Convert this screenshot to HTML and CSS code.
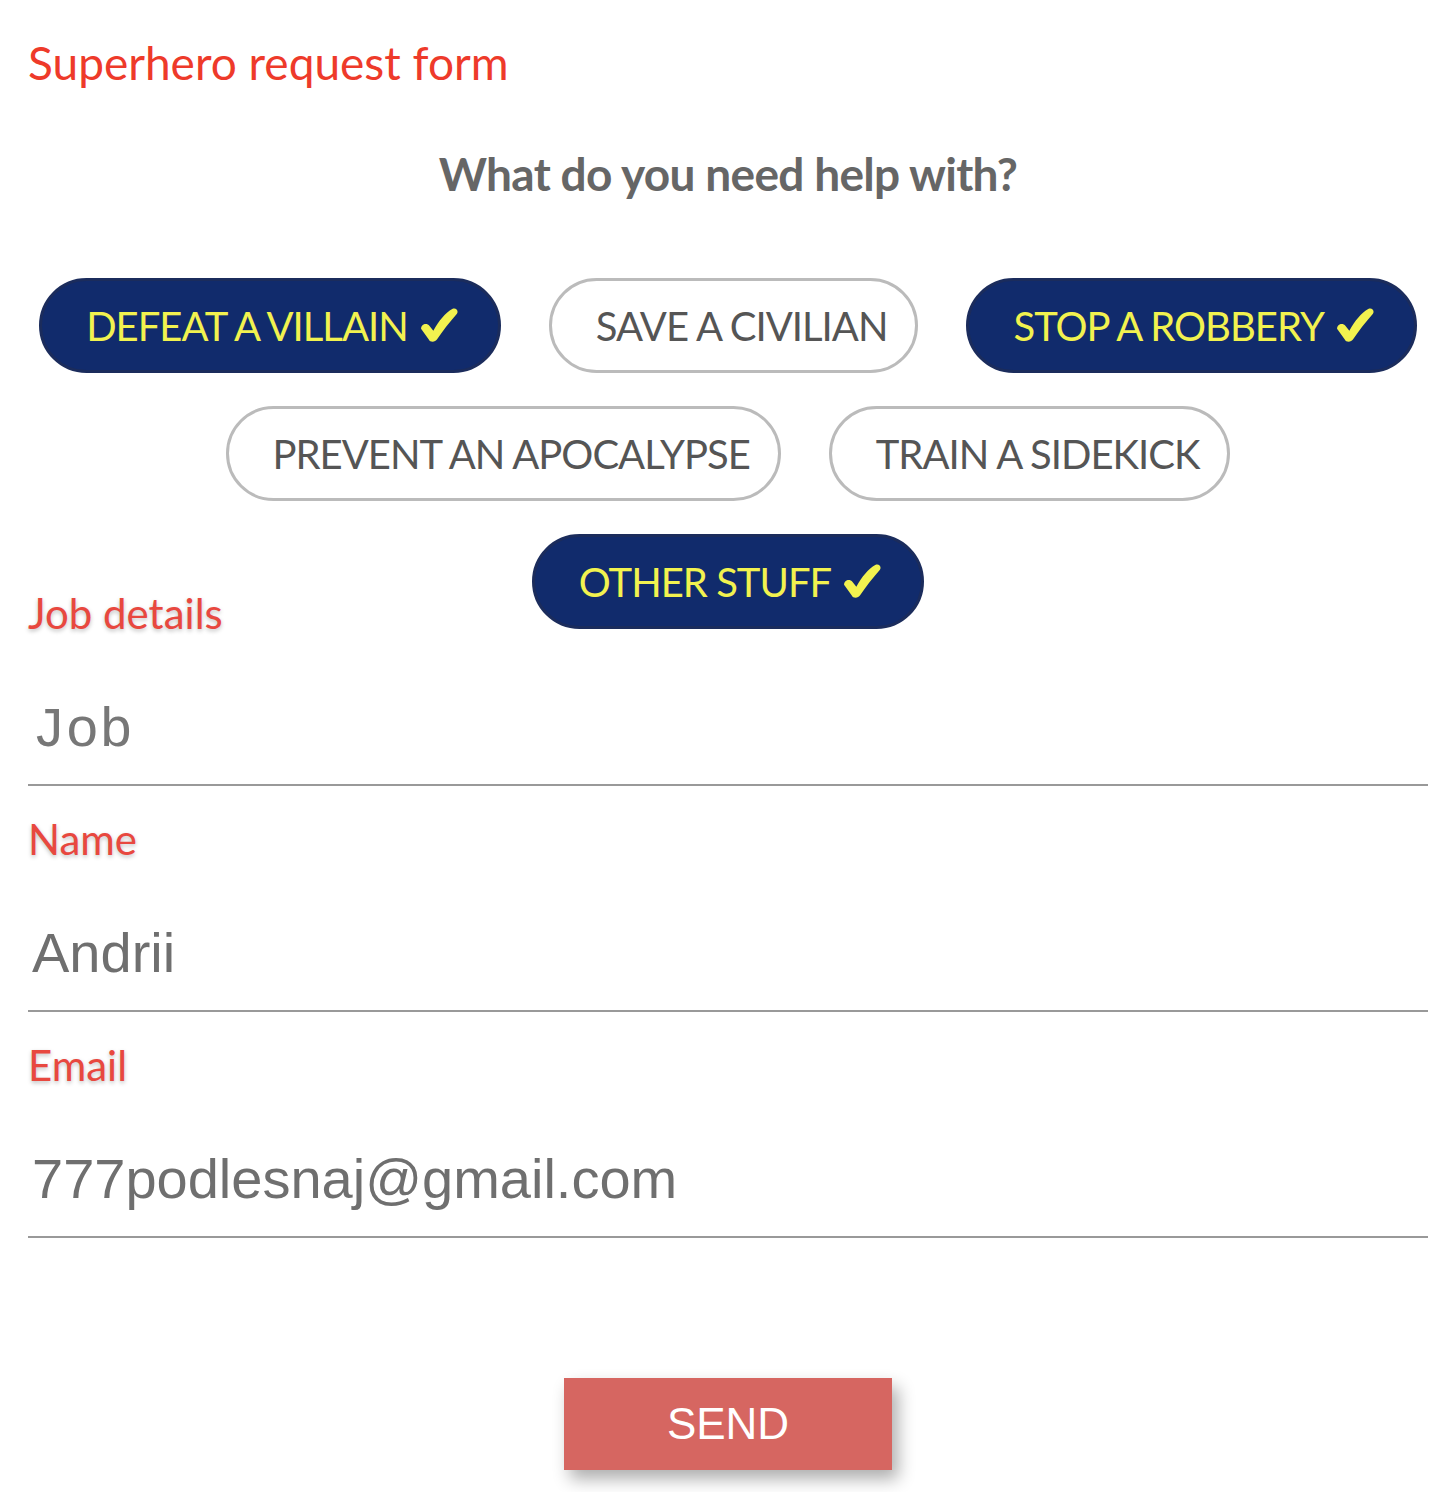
FILE: index.html
```html
<!DOCTYPE html>
<html lang="en">
<head>
<meta charset="utf-8">
<title>Superhero request form</title>
<link rel="stylesheet" href="styles.css">
</head>
<body>
<main class="form">
  <h1 class="title">Superhero request form</h1>
  <h2 class="question">What do you need help with?</h2>
  <div class="options">
    <button class="chip is-on">DEFEAT A VILLAIN <svg class="check" viewBox="0 0 40 36" aria-hidden="true"><path d="M1 22 C1 17 7 15 10 19 L14 24 C20 13 27 5 34 1 C38 -1 41 3 39 6 C31 15 24 24 18 33 C16 36 11 37 9 33 Z"/></svg></button>
    <button class="chip">SAVE A CIVILIAN</button>
    <button class="chip is-on">STOP A ROBBERY <svg class="check" viewBox="0 0 40 36" aria-hidden="true"><path d="M1 22 C1 17 7 15 10 19 L14 24 C20 13 27 5 34 1 C38 -1 41 3 39 6 C31 15 24 24 18 33 C16 36 11 37 9 33 Z"/></svg></button>
    <button class="chip">PREVENT AN APOCALYPSE</button>
    <button class="chip">TRAIN A SIDEKICK</button>
    <button class="chip is-on">OTHER STUFF <svg class="check" viewBox="0 0 40 36" aria-hidden="true"><path d="M1 22 C1 17 7 15 10 19 L14 24 C20 13 27 5 34 1 C38 -1 41 3 39 6 C31 15 24 24 18 33 C16 36 11 37 9 33 Z"/></svg></button>
  </div>
  <label class="label" for="job">Job details</label>
  <input class="field" id="job" type="text" placeholder="Job">
  <label class="label" for="name">Name</label>
  <input class="field" id="name" type="text" value="Andrii">
  <label class="label" for="email">Email</label>
  <input class="field" id="email" type="email" value="777podlesnaj@gmail.com">
  <div class="actions">
    <button class="send">SEND</button>
  </div>
</main>
</body>
</html>
```

FILE: styles.css
```css
* { box-sizing: border-box; }
html, body { margin: 0; padding: 0; background: #fff; }
body { font-family: "Lato", "Open Sans", sans-serif; }

.form {
  width: 1400px;
  margin-left: 28px;
  padding-top: 28px;
}

.title {
  margin: 0;
  font-size: 46px;
  line-height: 70px;
  font-weight: 400;
  color: #ee3a2a;
}

.question {
  margin: 46px 0 0;
  text-align: center;
  font-size: 46px;
  letter-spacing: -0.7px;
  line-height: 60px;
  font-weight: 700;
  color: #666;
}

.options {
  margin-top: 74px;
  height: 310px;
  display: flex;
  flex-wrap: wrap;
  justify-content: center;
  align-content: flex-start;
  gap: 33px 48px;
}

.chip {
  display: inline-flex;
  align-items: center;
  height: 95px;
  padding: 0 28px 0 44px;
  border: 3px solid #bbb;
  border-radius: 48px;
  background: #fff;
  color: #555;
  font-family: "Lato", "Open Sans", sans-serif;
  font-size: 40px;
  letter-spacing: -1px;
  line-height: 1;
  white-space: nowrap;
}

.chip.is-on {
  background: #112b6c;
  border-color: #1b2c5c;
  color: #f2f24f;
  padding-right: 40px;
}

.check {
  width: 38px;
  height: 34px;
  margin-left: 12px;
  margin-top: -2px;
  fill: #f2f24f;
}

.label {
  display: block;
  font-size: 42px;
  line-height: 50px;
  color: #e8483f;
  text-shadow: 0 2px 4px rgba(0, 0, 0, 0.25);
}

.field {
  display: block;
  width: 100%;
  height: 148px;
  margin: 0 0 28px;
  padding: 30px 4px 0;
  border: 0;
  border-bottom: 2px solid #999;
  outline: none;
  background: transparent;
  font-family: "Liberation Sans", Arial, sans-serif;
  font-size: 56px;
  color: #6f6f6f;
}

.field::placeholder {
  font-family: "Liberation Mono", "Courier New", monospace;
  color: #777;
  opacity: 1;
}

.actions {
  display: flex;
  justify-content: center;
  padding-top: 112px;
  padding-bottom: 24px;
}

.send {
  width: 328px;
  height: 92px;
  border: 0;
  background: #d66661;
  color: #fff;
  font-family: "Liberation Sans", Arial, sans-serif;
  font-size: 44px;
  box-shadow: 6px 9px 16px rgba(0, 0, 0, 0.32);
}
```
